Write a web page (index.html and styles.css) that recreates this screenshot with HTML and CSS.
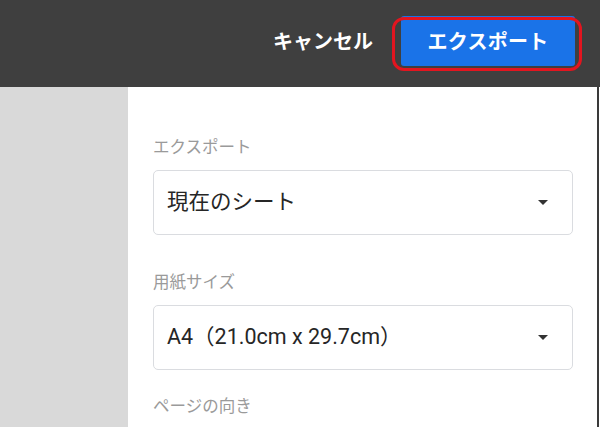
FILE: index.html
```html
<!DOCTYPE html>
<html lang="ja">
<head>
<meta charset="utf-8">
<title>エクスポート</title>
<link rel="stylesheet" href="styles.css">
</head>
<body>
<header class="topbar">
  <span class="cancel">キャンセル</span>
  <span class="export-wrap">
    <span class="export-btn">エクスポート</span>
    <span class="highlight"></span>
  </span>
</header>
<main class="main">
  <aside class="side"></aside>
  <section class="panel">
    <div class="field">
      <div class="label">エクスポート</div>
      <div class="select"><span class="value">現在のシート</span><span class="caret"></span></div>
    </div>
    <div class="field">
      <div class="label">用紙サイズ</div>
      <div class="select"><span class="value">A4（21.0cm x 29.7cm）</span><span class="caret"></span></div>
    </div>
    <div class="field field-last">
      <div class="label">ページの向き</div>
    </div>
  </section>
</main>
</body>
</html>
```

FILE: styles.css
```css
html, body {
  margin: 0;
  padding: 0;
  width: 600px;
  height: 427px;
  overflow: hidden;
  background: #ffffff;
  font-family: Roboto, "Noto Sans CJK JP", sans-serif;
}

.topbar {
  height: 87px;
  background: #3f3f3f;
  display: flex;
  justify-content: flex-end;
  align-items: flex-start;
  padding: 16px 25px 0 0;
  box-sizing: border-box;
}

.cancel {
  color: #ffffff;
  font-family: "Noto Sans CJK JP", sans-serif;
  font-weight: 700;
  font-size: 20px;
  line-height: 50px;
  margin-right: 28px;
}

.export-wrap {
  position: relative;
  display: block;
}

.export-btn {
  display: block;
  width: 174px;
  height: 50px;
  line-height: 50px;
  background: #1a73e8;
  color: #ffffff;
  text-align: center;
  font-family: "Noto Sans CJK JP", sans-serif;
  font-weight: 700;
  font-size: 20px;
  letter-spacing: 0.3px;
  border-radius: 3px;
}

.highlight {
  position: absolute;
  left: -9px;
  top: 1px;
  width: 190px;
  height: 54px;
  box-sizing: border-box;
  border: 3px solid #e3151f;
  border-radius: 12px;
}

.main {
  display: flex;
  height: 340px;
}

.side {
  width: 128px;
  background: #d9d9d9;
  flex: none;
}

.panel {
  flex: 1;
  padding: 49px 24px 0 25px;
  border-right: 2px solid #3a3a3a;
  margin-right: 1px;
}

.field {
  margin-bottom: 36px;
}

.field-last {
  margin-bottom: 0;
}

.field + .field-last {
  margin-top: -11px;
}

.label {
  font-family: "Noto Sans CJK JP", sans-serif;
  font-size: 16.5px;
  line-height: 20px;
  color: #9a9a9a;
  margin-bottom: 14px;
}

.select {
  height: 65px;
  box-sizing: border-box;
  border: 1px solid #dadce0;
  border-radius: 5px;
  display: flex;
  align-items: center;
  justify-content: space-between;
  padding: 0 24px 0 13px;
}

.value {
  font-size: 21.5px;
  color: #262626;
  margin-bottom: 6px;
}

.caret {
  width: 0;
  height: 0;
  border-left: 5.5px solid transparent;
  border-right: 5.5px solid transparent;
  border-top: 5.5px solid #333333;
}
```
